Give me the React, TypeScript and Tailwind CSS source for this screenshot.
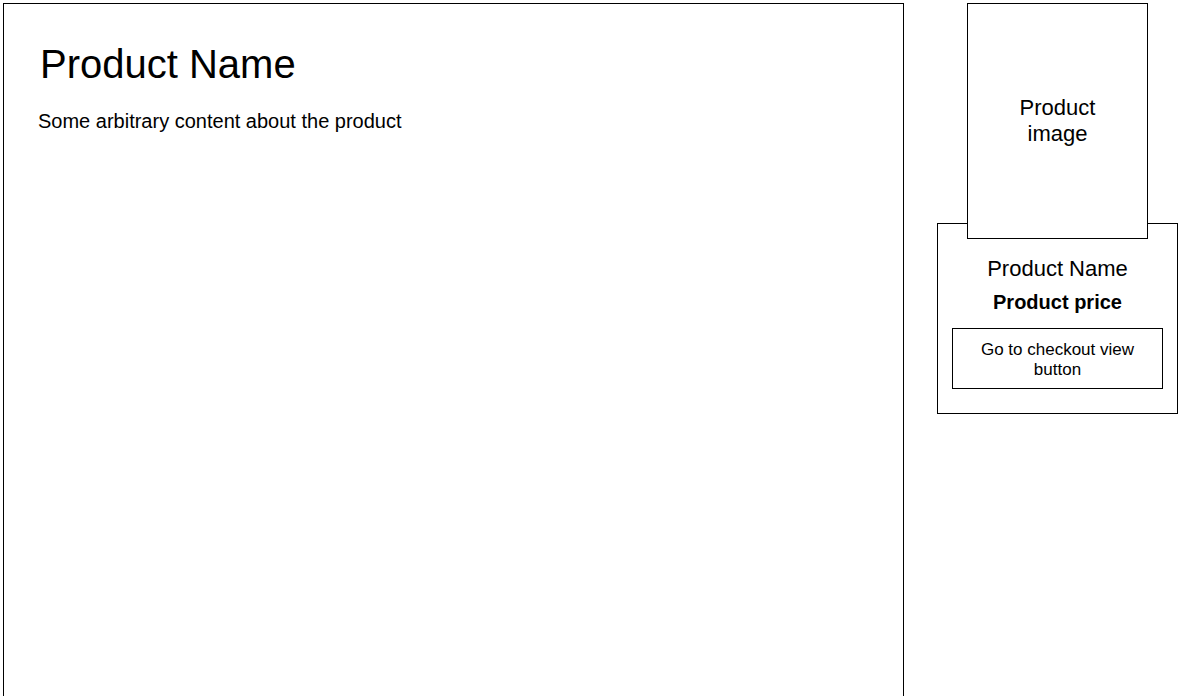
export default function App() {
  return (
    <div
      className="h-screen overflow-hidden bg-white text-black flex items-start pl-[3px] pt-[3px]"
      style={{ fontFamily: '"Liberation Sans", Arial, sans-serif' }}
    >
      <main className="w-[901px] h-[740px] shrink-0 border border-black pl-[34px] pt-[36px]">
        <h1 className="ml-[2px] text-[40px] leading-[48px] font-normal">Product Name</h1>
        <p className="mt-[21px] text-[20px] leading-[24px]">Some arbitrary content about the product</p>
      </main>

      <aside className="ml-[33px] w-[241px] shrink-0 flex flex-col">
        <div className="relative z-10 mx-auto w-[181px] h-[236px] border border-black bg-white flex items-center justify-center text-center text-[22px] leading-[26px]">
          Product
          <br />
          image
        </div>
        <div className="-mt-[16px] h-[191px] border border-black px-[14px] pt-[32px] flex flex-col items-center">
          <p className="text-[22px] leading-[26px]">Product Name</p>
          <p className="mt-[8px] text-[20px] leading-[24px] font-bold">Product price</p>
          <button className="mt-[14px] w-[211px] h-[61px] border border-black bg-white px-[6px] pt-[11px] flex flex-col items-center justify-start text-center text-[17px] leading-[20px]">
            <span>Go to checkout view</span>
            <span>button</span>
          </button>
        </div>
      </aside>
    </div>
  );
}
